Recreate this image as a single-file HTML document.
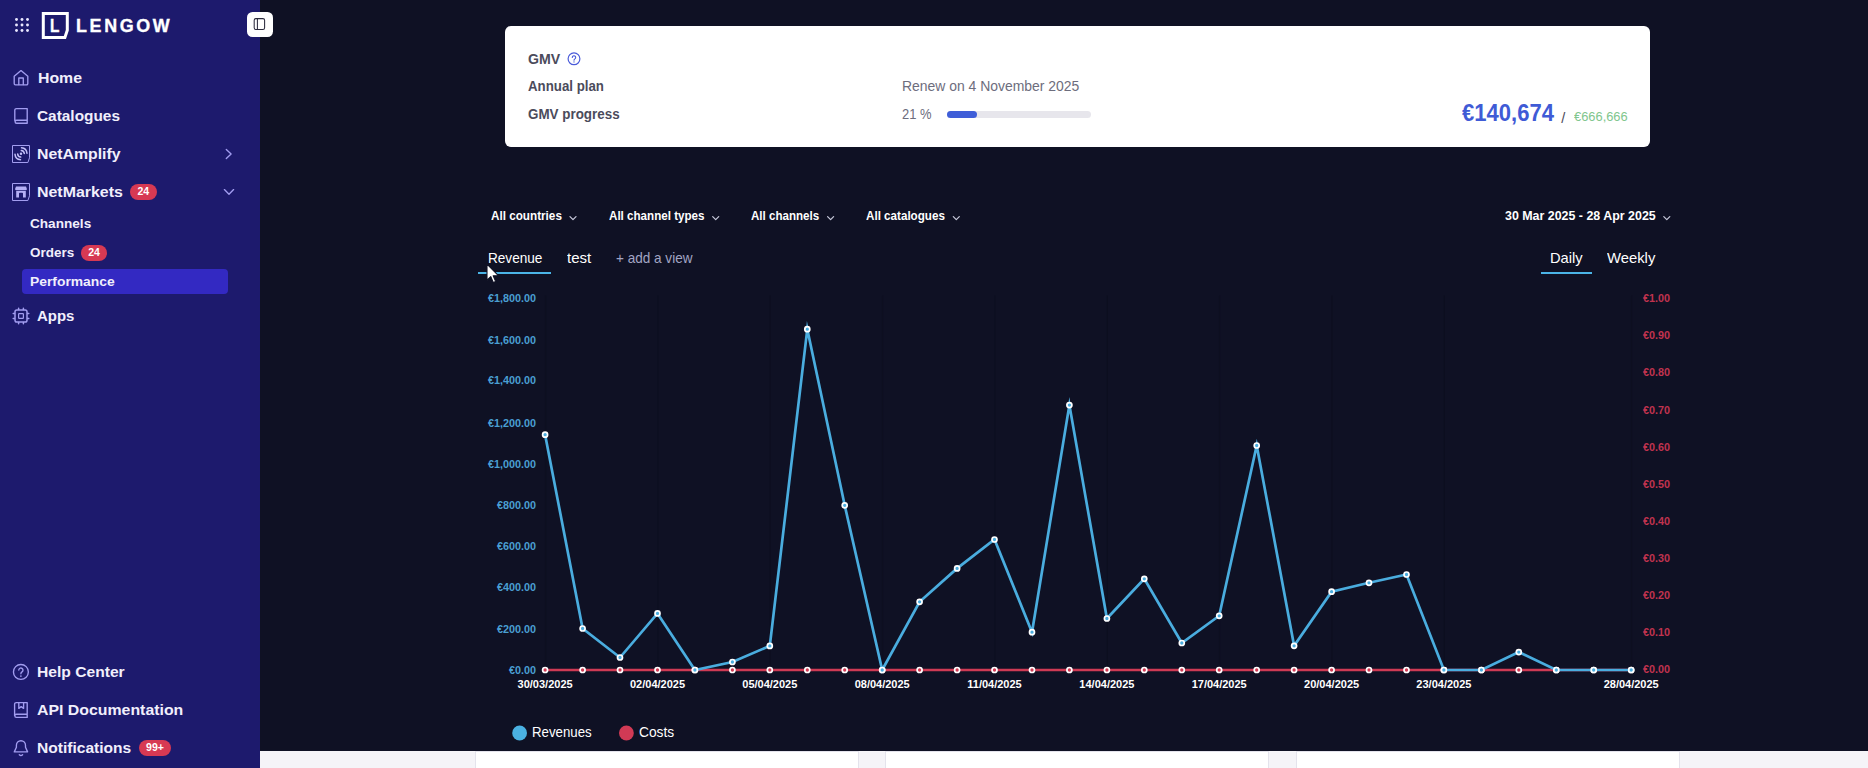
<!DOCTYPE html><html lang="en"><head><meta charset="utf-8"><title>Lengow - Performance</title><style>
*{box-sizing:border-box;margin:0;padding:0}
html,body{width:1868px;height:768px;overflow:hidden;background:#0f1124}
body{position:relative;font-family:"Liberation Sans",sans-serif;color:#fff}
.abs{position:absolute;white-space:nowrap}
#sidebar{position:absolute;left:0;top:0;width:260px;height:768px;background:#1d1a6d}
.badge{position:absolute;background:#d73953;border-radius:8px;color:#fff;font-weight:bold;font-size:10.5px;line-height:15.5px;text-align:center;height:15.5px}
#card{position:absolute;left:505px;top:26px;width:1145px;height:121px;background:#fff;border-radius:6px}
</style></head><body>
<div id="sidebar">
<svg class="abs" style="left:0;top:0" width="40" height="50" viewBox="0 0 40 50"><g fill="#e9e7ff"><circle cx="16.5" cy="19.5" r="1.45"/><circle cx="22" cy="19.5" r="1.45"/><circle cx="27.5" cy="19.5" r="1.45"/><circle cx="16.5" cy="25" r="1.45"/><circle cx="22" cy="25" r="1.45"/><circle cx="27.5" cy="25" r="1.45"/><circle cx="16.5" cy="30.5" r="1.45"/><circle cx="22" cy="30.5" r="1.45"/><circle cx="27.5" cy="30.5" r="1.45"/></g></svg>
<svg class="abs" style="left:40px;top:10px" width="32" height="32" viewBox="40 10 32 32"><path d="M43.3 13.5 H67.3 V30.3 L64.9 37.5 H43.3 Z" fill="none" stroke="#fff" stroke-width="3"/></svg>
<div class="abs" style="left:50.4px;top:13.9px;font-size:17.5px;line-height:24px;font-weight:bold;color:#fff;transform-origin:0 0;transform:scaleX(0.8782);-webkit-text-stroke:0.35px #fff;">L</div>
<div class="abs" style="left:76.0px;top:13.6px;font-size:17.5px;line-height:24px;font-weight:bold;color:#fff;transform-origin:0 0;transform:scaleX(1.0218);letter-spacing:2.6px;-webkit-text-stroke:0.35px #fff;">LENGOW</div>
</div>
<div class="abs" style="left:247.2px;top:11.8px;width:25.5px;height:25.4px;background:#fff;border-radius:5.5px"></div><svg class="abs" style="left:247px;top:11px" width="27" height="27" viewBox="247 11 27 27"><rect x="254.2" y="18.6" width="10.4" height="10.8" rx="1.7" fill="none" stroke="#2b2a3d" stroke-width="1.05"/><path d="M257.4 18.6V29.4" stroke="#2b2a3d" stroke-width="1.05"/></svg>
<div id="navs">
<div class="abs" style="left:22px;top:269.3px;width:206px;height:24.6px;background:#3329c2;border-radius:4px"></div>
<div class="abs" style="left:37.6px;top:68.4px;font-size:14.2px;line-height:20px;font-weight:bold;color:#f1effc;transform-origin:0 0;transform:scaleX(1.1161);">Home</div>
<div class="abs" style="left:37.0px;top:106.3px;font-size:14.2px;line-height:20px;font-weight:bold;color:#f1effc;transform-origin:0 0;transform:scaleX(1.0852);">Catalogues</div>
<div class="abs" style="left:37.3px;top:144.4px;font-size:14.2px;line-height:20px;font-weight:bold;color:#f1effc;transform-origin:0 0;transform:scaleX(1.1150);">NetAmplify</div>
<div class="abs" style="left:37.3px;top:181.5px;font-size:14.2px;line-height:20px;font-weight:bold;color:#f1effc;transform-origin:0 0;transform:scaleX(1.1229);">NetMarkets</div>
<div class="abs" style="left:37.2px;top:306.4px;font-size:14.2px;line-height:20px;font-weight:bold;color:#f1effc;transform-origin:0 0;transform:scaleX(1.0544);">Apps</div>
<div class="abs" style="left:37.0px;top:662.4px;font-size:14.2px;line-height:20px;font-weight:bold;color:#f1effc;transform-origin:0 0;transform:scaleX(1.1014);">Help Center</div>
<div class="abs" style="left:37.0px;top:700.4px;font-size:14.2px;line-height:20px;font-weight:bold;color:#f1effc;transform-origin:0 0;transform:scaleX(1.1180);">API Documentation</div>
<div class="abs" style="left:37.0px;top:738.4px;font-size:14.2px;line-height:20px;font-weight:bold;color:#f1effc;transform-origin:0 0;transform:scaleX(1.0963);">Notifications</div>
<div class="abs" style="left:29.8px;top:215.1px;font-size:13.0px;line-height:18px;font-weight:bold;color:#f1effc;transform-origin:0 0;transform:scaleX(1.0459);">Channels</div>
<div class="abs" style="left:29.8px;top:244.1px;font-size:13.0px;line-height:18px;font-weight:bold;color:#f1effc;transform-origin:0 0;transform:scaleX(1.0366);">Orders</div>
<div class="abs" style="left:29.8px;top:273.1px;font-size:13.0px;line-height:18px;font-weight:bold;color:#f1effc;transform-origin:0 0;transform:scaleX(1.0656);">Performance</div>
<div class="badge" style="left:130.1px;top:184.1px;width:26.5px">24</div>
<div class="badge" style="left:81px;top:245.2px;width:26px">24</div>
<div class="badge" style="left:139.2px;top:740.2px;width:31.6px">99+</div>
</div>
<svg class="abs" id="sbicons" style="left:0;top:0" width="260" height="768" viewBox="0 0 260 768"><g fill="none" stroke="#a29df0" stroke-width="1.35" stroke-linecap="round" stroke-linejoin="round"><path d="M14.2 76.2 L21 70.6 L27.8 76.2 V83.6 A1.2 1.2 0 0 1 26.6 84.8 H15.4 A1.2 1.2 0 0 1 14.2 83.6 Z"/><path d="M18.8 84.6 V78 H23.3 V84.6"/><path d="M14.8 120.8 V110.3 A1.7 1.7 0 0 1 16.5 108.6 H27.2 V123.2 H16.6 A1.5 1.5 0 0 1 16.6 120.2 H27.2"/><path d="M226.3 149.4 L231.1 154 L226.3 158.6"/><path d="M224.4 189.6 L229 194.2 L233.6 189.6"/><rect x="15" y="310" width="12" height="12" rx="1.8" stroke-width="1.5"/><rect x="18.6" y="313.6" width="4.8" height="4.8" rx="0.6" stroke-width="1.2"/><path d="M18.6 308.2V309.4M23.4 308.2V309.4M18.6 322.6V323.8M23.4 322.6V323.8M13.2 313.6H14.4M13.2 318.4H14.4M27.6 313.6H28.8M27.6 318.4H28.8" stroke-width="1.5"/><circle cx="20.9" cy="671.9" r="7.45"/><path d="M18.8 670 a2.1 2.1 0 1 1 3.2 1.9 c-0.8 0.5-1.1 0.9-1.1 1.8"/><path d="M20.9 676v0.15" stroke-width="1.6"/><path d="M14.6 715.6 V704.3 A1.7 1.7 0 0 1 16.3 702.6 H27.2 V717.4 H16.4 A1.6 1.6 0 0 1 16.4 714.2 H27.2"/><path d="M18.8 702.8 V708.4 L21.2 706.6 L23.6 708.4 V702.8"/><path d="M14.3 751.9 L16.4 747.3 V745.3 A4.55 4.55 0 0 1 25.5 745.3 V747.3 L27.6 751.9 Z"/><path d="M19.3 754.7 q1.65 1.5 3.3 0"/></g><g fill="none" stroke="#a29df0" stroke-width="1"><path d="M12.5 145.5 H29.5 V157.8 L27.9 162.5 H12.5 Z"/><path d="M12.5 183.5 H29.5 V195.8 L27.9 200.5 H12.5 Z"/></g><g fill="none" stroke="#c4c0fa" stroke-width="1.5" stroke-linecap="round"><path d="M21.29 150.51 A3.3 3.3 0 0 1 24.29 153.51"/><path d="M21.52 147.82 A6.0 6.0 0 0 1 26.98 153.28"/><path d="M20.71 157.09 A3.3 3.3 0 0 1 17.71 154.09"/><path d="M20.48 159.78 A6.0 6.0 0 0 1 15.02 154.32"/></g><circle cx="21" cy="153.8" r="1.2" fill="#c4c0fa"/><g fill="#b5b0f6"><path d="M16 186.6 H26 L26.9 189 Q26.9 190.2 25.7 190.2 H16.3 Q15.1 190.2 15.1 189 Z"/><path d="M16.2 190.9 H25.8 V197.6 H23 V193.6 Q23 192.8 22.2 192.8 H19.8 Q19 192.8 19 193.6 V197.6 H16.2 Z"/></g></svg>
<div id="card"></div>
<div class="abs" style="left:528.1px;top:48.9px;font-size:14px;line-height:20px;font-weight:bold;color:#4b4b5b;transform-origin:0 0;transform:scaleX(1.0097);">GMV</div>
<svg class="abs" style="left:566px;top:51px" width="16" height="16" viewBox="566 51 16 16"><circle cx="574" cy="58.8" r="5.9" fill="none" stroke="#4a5bd9" stroke-width="1.2"/><path d="M572.3 57.4 a1.7 1.7 0 1 1 2.6 1.45 c-0.65 0.4-0.9 0.7-0.9 1.3" fill="none" stroke="#4a5bd9" stroke-width="1.1" stroke-linecap="round"/><circle cx="574" cy="61.9" r="0.7" fill="#4a5bd9"/></svg>
<div class="abs" style="left:528.1px;top:76.1px;font-size:14px;line-height:20px;font-weight:bold;color:#4b4b5b;transform-origin:0 0;transform:scaleX(0.9473);">Annual plan</div>
<div class="abs" style="left:528.1px;top:103.8px;font-size:14px;line-height:20px;font-weight:bold;color:#4b4b5b;transform-origin:0 0;transform:scaleX(0.9571);">GMV progress</div>
<div class="abs" style="left:902.1px;top:76.0px;font-size:14.5px;line-height:20px;font-weight:normal;color:#6d6d7d;transform-origin:0 0;transform:scaleX(0.9605);">Renew on 4 November 2025</div>
<div class="abs" style="left:902.1px;top:103.8px;font-size:14.5px;line-height:20px;font-weight:normal;color:#6d6d7d;transform-origin:0 0;transform:scaleX(0.8922);">21 %</div>
<div class="abs" style="left:946.8px;top:111.1px;width:144px;height:7px;border-radius:4px;background:#e7e6ec"></div>
<div class="abs" style="left:946.8px;top:111.1px;width:30.3px;height:7px;border-radius:4px;background:#3f5ed8"></div>
<div class="abs" style="left:1462.1px;top:96.6px;font-size:23px;line-height:32px;font-weight:bold;color:#3f5bd6;transform-origin:0 0;transform:scaleX(0.9579);">€140,674</div>
<div class="abs" style="left:1561.3px;top:108.6px;font-size:14.5px;line-height:18px;color:#4b4b5a">/</div>
<div class="abs" style="left:1573.7px;top:107.8px;font-size:13px;line-height:18px;font-weight:normal;color:#80c68d;transform-origin:0 0;transform:scaleX(0.9901);">€666,666</div>
<div id="filters"><div class="abs" style="left:491.0px;top:206.3px;font-size:13.6px;line-height:19px;font-weight:bold;color:#fff;transform-origin:0 0;transform:scaleX(0.8610);">All countries</div><div class="abs" style="left:609.1px;top:206.3px;font-size:13.6px;line-height:19px;font-weight:bold;color:#fff;transform-origin:0 0;transform:scaleX(0.8541);">All channel types</div><div class="abs" style="left:751.4px;top:206.3px;font-size:13.6px;line-height:19px;font-weight:bold;color:#fff;transform-origin:0 0;transform:scaleX(0.8504);">All channels</div><div class="abs" style="left:866.3px;top:206.3px;font-size:13.6px;line-height:19px;font-weight:bold;color:#fff;transform-origin:0 0;transform:scaleX(0.8560);">All catalogues</div><div class="abs" style="left:1505.0px;top:206.3px;font-size:13.6px;line-height:19px;font-weight:bold;color:#fff;transform-origin:0 0;transform:scaleX(0.9133);">30 Mar 2025 - 28 Apr 2025</div></div>
<svg class="abs" style="left:0;top:200px" width="1868" height="40" viewBox="0 200 1868 40"><g fill="none" stroke="#c6c8da" stroke-width="1.25" stroke-linecap="round" stroke-linejoin="round"><path d="M570.0 216.6 l3 3 l3 -3"/><path d="M712.7 216.6 l3 3 l3 -3"/><path d="M827.6 216.6 l3 3 l3 -3"/><path d="M953.3 216.6 l3 3 l3 -3"/><path d="M1663.8 216.6 l3 3 l3 -3"/></g></svg>
<div id="tabs"><div class="abs" style="left:487.8px;top:248.0px;font-size:14.5px;line-height:20px;font-weight:normal;color:#fff;transform-origin:0 0;transform:scaleX(0.9372);">Revenue</div><div class="abs" style="left:566.6px;top:248.0px;font-size:14.5px;line-height:20px;font-weight:normal;color:#fff;transform-origin:0 0;transform:scaleX(1.0353);">test</div><div class="abs" style="left:615.5px;top:248.0px;font-size:14.5px;line-height:20px;font-weight:normal;color:#a2a5c3;transform-origin:0 0;transform:scaleX(0.9349);">+ add a view</div><div class="abs" style="left:478px;top:271.6px;width:73px;height:2.6px;background:#4bb4e6"></div><div class="abs" style="left:1550.0px;top:248.0px;font-size:14.5px;line-height:20px;font-weight:normal;color:#fff;transform-origin:0 0;transform:scaleX(1.0113);">Daily</div><div class="abs" style="left:1607.0px;top:248.0px;font-size:14.5px;line-height:20px;font-weight:normal;color:#fff;transform-origin:0 0;transform:scaleX(1.0215);">Weekly</div><div class="abs" style="left:1541px;top:271.6px;width:51px;height:2.6px;background:#4bb4e6"></div></div>
<svg class="abs" id="chart" style="left:0;top:0" width="1868" height="768" viewBox="0 0 1868 768">
<g stroke="#0d0f20" stroke-width="1.3" fill="none"><path d="M545.5 295.5V670"/><path d="M657.9 295.5V670"/><path d="M770.2 295.5V670"/><path d="M882.6 295.5V670"/><path d="M994.9 295.5V670"/><path d="M1107.3 295.5V670"/><path d="M1219.6 295.5V670"/><path d="M1332.0 295.5V670"/><path d="M1444.3 295.5V670"/><path d="M1631.6 295.5V670"/></g>
<path d="M545.1 670.0H1631.2" stroke="#cf3a54" stroke-width="2.7" fill="none"/>
<g fill="#cf3a54" stroke="#fff" stroke-width="1.7"><circle cx="545.1" cy="670.0" r="2.5"/><circle cx="582.6" cy="670.0" r="2.5"/><circle cx="620.0" cy="670.0" r="2.5"/><circle cx="657.5" cy="670.0" r="2.5"/><circle cx="694.9" cy="670.0" r="2.5"/><circle cx="732.4" cy="670.0" r="2.5"/><circle cx="769.8" cy="670.0" r="2.5"/><circle cx="807.3" cy="670.0" r="2.5"/><circle cx="844.7" cy="670.0" r="2.5"/><circle cx="882.2" cy="670.0" r="2.5"/><circle cx="919.6" cy="670.0" r="2.5"/><circle cx="957.1" cy="670.0" r="2.5"/><circle cx="994.5" cy="670.0" r="2.5"/><circle cx="1032.0" cy="670.0" r="2.5"/><circle cx="1069.4" cy="670.0" r="2.5"/><circle cx="1106.9" cy="670.0" r="2.5"/><circle cx="1144.3" cy="670.0" r="2.5"/><circle cx="1181.8" cy="670.0" r="2.5"/><circle cx="1219.2" cy="670.0" r="2.5"/><circle cx="1256.7" cy="670.0" r="2.5"/><circle cx="1294.1" cy="670.0" r="2.5"/><circle cx="1331.6" cy="670.0" r="2.5"/><circle cx="1369.0" cy="670.0" r="2.5"/><circle cx="1406.5" cy="670.0" r="2.5"/><circle cx="1443.9" cy="670.0" r="2.5"/><circle cx="1481.4" cy="670.0" r="2.5"/><circle cx="1518.8" cy="670.0" r="2.5"/><circle cx="1556.3" cy="670.0" r="2.5"/><circle cx="1593.7" cy="670.0" r="2.5"/><circle cx="1631.2" cy="670.0" r="2.5"/></g>
<polyline points="545.1,434.7 582.6,628.5 620.0,657.5 657.5,613.4 694.9,670 732.4,662 769.8,645.9 807.3,329.2 844.7,505.3 882.2,670 919.6,601.8 957.1,568.4 994.5,539.5 1032.0,632.2 1069.4,405.1 1106.9,618.5 1144.3,578.8 1181.8,643 1219.2,615.8 1256.7,445.5 1294.1,645.8 1331.6,591.7 1369.0,582.8 1406.5,574.5 1443.9,670 1481.4,670 1518.8,652.1 1556.3,670 1593.7,670 1631.2,670" fill="none" stroke="#4aaddf" stroke-width="2.7" stroke-linejoin="miter" stroke-miterlimit="10"/>
<g fill="#4aaddf" stroke="#fff" stroke-width="1.7"><circle cx="545.1" cy="434.7" r="2.5"/><circle cx="582.6" cy="628.5" r="2.5"/><circle cx="620.0" cy="657.5" r="2.5"/><circle cx="657.5" cy="613.4" r="2.5"/><circle cx="694.9" cy="670" r="2.5"/><circle cx="732.4" cy="662" r="2.5"/><circle cx="769.8" cy="645.9" r="2.5"/><circle cx="807.3" cy="329.2" r="2.5"/><circle cx="844.7" cy="505.3" r="2.5"/><circle cx="882.2" cy="670" r="2.5"/><circle cx="919.6" cy="601.8" r="2.5"/><circle cx="957.1" cy="568.4" r="2.5"/><circle cx="994.5" cy="539.5" r="2.5"/><circle cx="1032.0" cy="632.2" r="2.5"/><circle cx="1069.4" cy="405.1" r="2.5"/><circle cx="1106.9" cy="618.5" r="2.5"/><circle cx="1144.3" cy="578.8" r="2.5"/><circle cx="1181.8" cy="643" r="2.5"/><circle cx="1219.2" cy="615.8" r="2.5"/><circle cx="1256.7" cy="445.5" r="2.5"/><circle cx="1294.1" cy="645.8" r="2.5"/><circle cx="1331.6" cy="591.7" r="2.5"/><circle cx="1369.0" cy="582.8" r="2.5"/><circle cx="1406.5" cy="574.5" r="2.5"/><circle cx="1443.9" cy="670" r="2.5"/><circle cx="1481.4" cy="670" r="2.5"/><circle cx="1518.8" cy="652.1" r="2.5"/><circle cx="1556.3" cy="670" r="2.5"/><circle cx="1593.7" cy="670" r="2.5"/><circle cx="1631.2" cy="670" r="2.5"/></g>
<g font-family="Liberation Sans, sans-serif" font-weight="bold" font-size="10.8" fill="#4a9fd2" text-anchor="end"><text x="536" y="302.3">€1,800.00</text><text x="536" y="344.4">€1,600.00</text><text x="536" y="384.4">€1,400.00</text><text x="536" y="426.5">€1,200.00</text><text x="536" y="468.1">€1,000.00</text><text x="536" y="508.7">€800.00</text><text x="536" y="550.0">€600.00</text><text x="536" y="591.3">€400.00</text><text x="536" y="632.7">€200.00</text><text x="536" y="673.5">€0.00</text></g>
<g font-family="Liberation Sans, sans-serif" font-weight="bold" font-size="10.8" fill="#c0334f" text-anchor="start"><text x="1643" y="302.1">€1.00</text><text x="1643" y="339.2">€0.90</text><text x="1643" y="376.3">€0.80</text><text x="1643" y="413.5">€0.70</text><text x="1643" y="450.6">€0.60</text><text x="1643" y="487.7">€0.50</text><text x="1643" y="524.8">€0.40</text><text x="1643" y="561.9">€0.30</text><text x="1643" y="599.1">€0.20</text><text x="1643" y="636.2">€0.10</text><text x="1643" y="673.3">€0.00</text></g>
<g font-family="Liberation Sans, sans-serif" font-weight="bold" font-size="11" fill="#fff" text-anchor="middle"><text x="545.1" y="687.8">30/03/2025</text><text x="657.5" y="687.8">02/04/2025</text><text x="769.8" y="687.8">05/04/2025</text><text x="882.2" y="687.8">08/04/2025</text><text x="994.5" y="687.8">11/04/2025</text><text x="1106.9" y="687.8">14/04/2025</text><text x="1219.2" y="687.8">17/04/2025</text><text x="1331.6" y="687.8">20/04/2025</text><text x="1443.9" y="687.8">23/04/2025</text><text x="1631.2" y="687.8">28/04/2025</text></g>
<circle cx="519.6" cy="733" r="7.4" fill="#4ab1e2"/><circle cx="626.4" cy="733" r="7.4" fill="#d13a55"/>
</svg>
<div class="abs" style="left:532.3px;top:722.0px;font-size:14.5px;line-height:20px;font-weight:normal;color:#fff;transform-origin:0 0;transform:scaleX(0.9143);">Revenues</div>
<div class="abs" style="left:638.8px;top:722.0px;font-size:14.5px;line-height:20px;font-weight:normal;color:#fff;transform-origin:0 0;transform:scaleX(0.9493);">Costs</div>
<div class="abs" style="left:260px;top:750.6px;width:1608px;height:18px;background:#f5f4f8"></div>
<div class="abs" style="left:475.3px;top:750.6px;width:384px;height:20px;background:#fff;border:1px solid #e4e3ec"></div>
<div class="abs" style="left:885.4px;top:750.6px;width:384px;height:20px;background:#fff;border:1px solid #e4e3ec"></div>
<div class="abs" style="left:1295.6px;top:750.6px;width:384px;height:20px;background:#fff;border:1px solid #e4e3ec"></div>
<svg class="abs" style="left:485px;top:262px" width="16" height="24" viewBox="0 0 16 24"><path d="M2 2 V18.2 L5.8 14.6 L8.3 20.6 L10.7 19.6 L8.2 13.7 H13.4 Z" fill="#fff" stroke="#111326" stroke-width="1.1" stroke-linejoin="round"/></svg>
</body></html>
